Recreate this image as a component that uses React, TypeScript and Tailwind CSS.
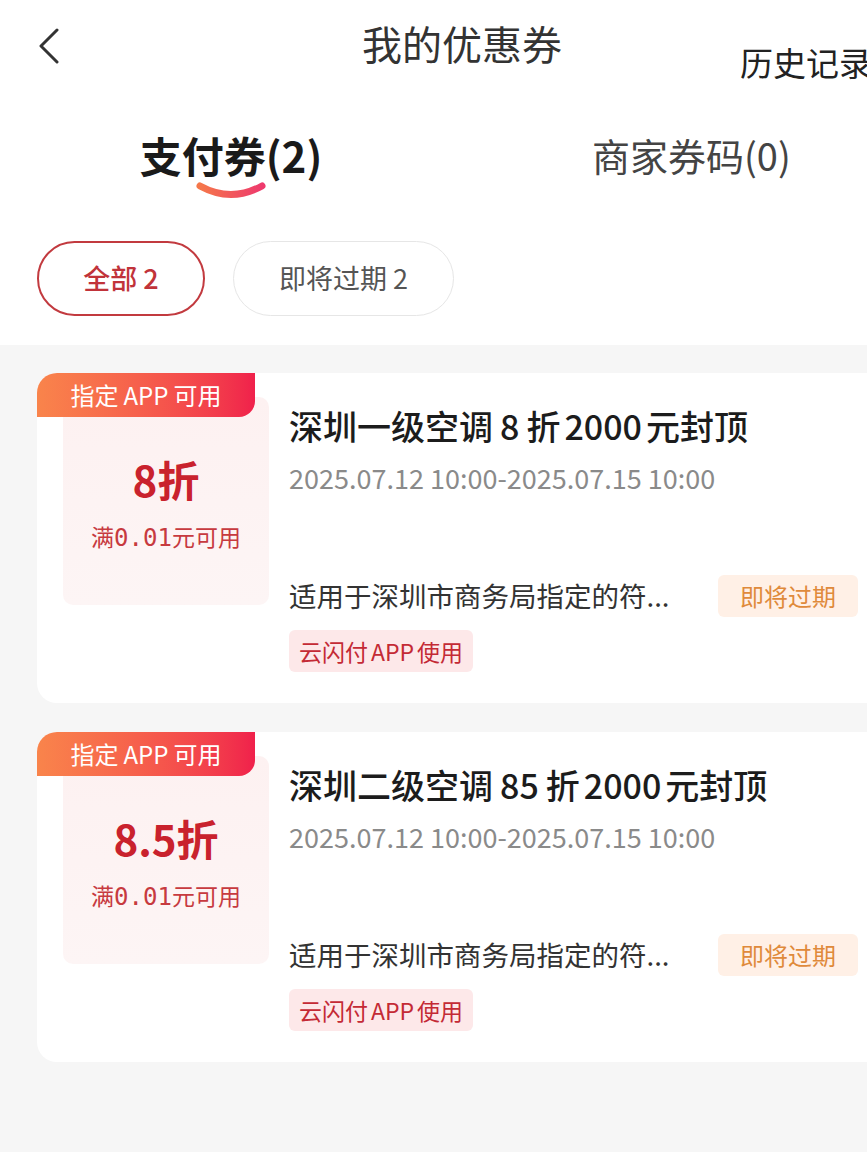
import React from "react";

type Coupon = {
  id: number;
  rate: string;
  titleHead: string;
  titleNum: string;
  titleTail: string;
};

const coupons: Coupon[] = [
  { id: 1, rate: "8", titleHead: "深圳一级空调", titleNum: "8", titleTail: "元封顶" },
  { id: 2, rate: "8.5", titleHead: "深圳二级空调", titleNum: "85", titleTail: "元封顶" },
];

const CouponCard = ({ c }: { c: Coupon }) => (
  <div className="relative ml-[37px] w-[850px] h-[330px] bg-white rounded-[20px] flex">
    {/* badge sits over the card corner */}
    <div className="absolute top-0 left-0 w-[218px] h-[44px] rounded-tl-[20px] rounded-br-[16px] bg-gradient-to-r from-[#f9844b] to-[#f0204b] flex items-center justify-center text-white text-[24px] leading-none z-10">
      指定<span className="mx-[5px]">APP</span>可用
    </div>

    <div className="ml-[26px] mt-[24px] w-[206px] h-[208px] rounded-[10px] bg-gradient-to-b from-[#fdf1f1] to-[#fdf5f5] flex flex-col items-center">
      <div className="mt-[60px] h-[44px] leading-[44px] text-[42px] font-bold text-[#c9222d]">
        {c.rate}折
      </div>
      <div className="mt-[20px] h-[30px] leading-[30px] text-[23px] text-[#c73a3f]">
        满<span className="font-['DejaVu_Sans_Mono',monospace] text-[24px]">0.01</span>元可用
      </div>
    </div>

    <div className="ml-[20px] flex-1 flex flex-col pr-[29px]">
      <div className="mt-[33px] h-[40px] leading-[40px] text-[34px] font-medium text-[#1c1c1c] whitespace-nowrap">
        {c.titleHead}
        <span className="mx-[7px]">{c.titleNum}</span>
        折<span className="mx-[4px]">2000</span>
        {c.titleTail}
      </div>
      <div className="mt-[16px] h-[32px] leading-[32px] text-[27px] text-[#8a8a8a] whitespace-nowrap">
        2025.07.12 10:00-2025.07.15 10:00
      </div>
      <div className="mt-[81px] h-[42px] flex items-center justify-between">
        <span className="text-[27.5px] text-[#333] whitespace-nowrap">适用于深圳市商务局指定的符...</span>
        <span className="h-[42px] px-[22px] rounded-[6px] bg-[#fff0e6] text-[#df8a3b] text-[24px] leading-[42px]">
          即将过期
        </span>
      </div>
      <div className="mt-[13px]">
        <span className="inline-block h-[42px] px-[10px] rounded-[6px] bg-[#fde8e9] text-[#c42a35] text-[23px] leading-[42px]">
          云闪付<span className="mx-[3px]">APP</span>使用
        </span>
      </div>
    </div>
  </div>
);

export default function App() {
  return (
    <div className="w-[867px] min-h-[1152px] bg-[#f6f6f6] overflow-hidden font-['Noto_Sans_CJK_SC','Noto_Sans',sans-serif]">
      <div className="bg-white pb-[29px]">
        {/* header */}
        <div className="h-[90px] flex items-start whitespace-nowrap overflow-hidden">
          <svg className="ml-[37px] mt-[28px] shrink-0" width="24" height="36" viewBox="0 0 24 36">
            <polyline points="20,2 4,18 20,34" fill="none" stroke="#333" strokeWidth="3" strokeLinecap="round" strokeLinejoin="round" />
          </svg>
          <div className="ml-[301px] mt-[21px] text-[40px] leading-[44px] text-[#333] shrink-0">我的优惠券</div>
          <div className="ml-[178px] mt-[43px] text-[33px] leading-[38px] text-[#222] shrink-0">历史记录</div>
        </div>

        {/* tabs */}
        <div className="pt-[40px] flex items-start">
          <div className="ml-[140px] w-[182px] flex flex-col items-center">
            <div className="h-[50px] leading-[50px] text-[42px] font-bold text-[#1a1a1a] whitespace-nowrap">支付券(2)</div>
            <svg className="mt-[1px]" width="72" height="18" viewBox="0 0 72 18">
              <defs>
                <linearGradient id="tabLine" x1="0" x2="1" y1="0" y2="0">
                  <stop offset="0" stopColor="#f5774a" />
                  <stop offset="1" stopColor="#ee3a6d" />
                </linearGradient>
              </defs>
              <path d="M5 5 Q36 22 67 5" fill="none" stroke="url(#tabLine)" strokeWidth="7" strokeLinecap="round" />
            </svg>
          </div>
          <div className="ml-[270px] h-[50px] leading-[50px] text-[38px] text-[#444] whitespace-nowrap">商家券码(0)</div>
        </div>

        {/* filter chips */}
        <div className="mt-[42px] ml-[37px] flex gap-[28px]">
          <div className="w-[168px] h-[75px] rounded-full border-2 border-[#c23a3f] flex items-center justify-center text-[27px] text-[#c1333a] font-medium">
            全部 2
          </div>
          <div className="w-[221px] h-[75px] rounded-full border-[1.5px] border-[#e6e6e6] flex items-center justify-center text-[27px] text-[#555]">
            即将过期 2
          </div>
        </div>
      </div>

      <div className="pt-[28px] flex flex-col gap-[29px]">
        {coupons.map((c) => (
          <CouponCard key={c.id} c={c} />
        ))}
      </div>
    </div>
  );
}
